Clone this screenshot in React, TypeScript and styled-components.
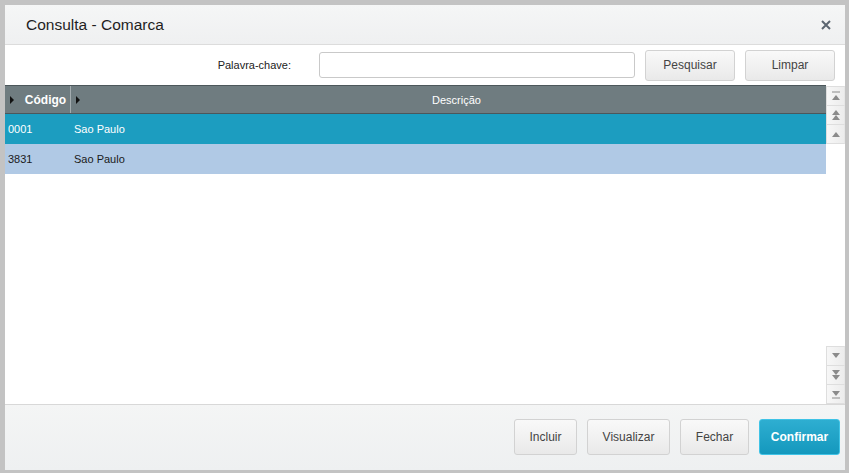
import React from 'react';
import styled, { createGlobalStyle, css } from 'styled-components';

const GlobalStyle = createGlobalStyle`
    html, body {
        margin: 0;
        padding: 0;
        background: #c3c3c3;
        font-family: Arial, 'Liberation Sans', sans-serif;
    }
    * {
        box-sizing: border-box;
    }
`;

interface Row {
    code: string;
    description: string;
}

const rows: Array<Row> = [
    { code: '0001', description: 'Sao Paulo' },
    { code: '3831', description: 'Sao Paulo' },
];

const Page = styled.div`
    width: 849px;
    height: 473px;
    padding: 5px 4px 3px 5px;
    background: #c3c3c3;
`;

const Dialog = styled.div`
    height: 100%;
    display: flex;
    flex-direction: column;
    background: #fff;
`;

const Header = styled.div`
    height: 40px;
    flex-shrink: 0;
    display: flex;
    align-items: center;
    justify-content: space-between;
    padding: 0 12px 0 21px;
    background: linear-gradient(#f5f6f6, #eff0f1);
    border-bottom: 1px solid #dcdcdc;
`;

const Title = styled.h1`
    margin: 0;
    font-size: 15.5px;
    font-weight: normal;
    color: #1f1f1f;
    padding-top: 1px;
`;

const CloseButton = styled.button`
    border: none;
    background: none;
    padding: 0;
    width: 14px;
    height: 14px;
    display: flex;
    align-items: center;
    justify-content: center;
    cursor: pointer;
`;

const SearchBar = styled.div`
    height: 40px;
    flex-shrink: 0;
    display: flex;
    align-items: center;
    justify-content: flex-end;
    padding: 0 10px 0 0;
`;

const Label = styled.label`
    font-size: 11px;
    color: #222;
    margin-right: 28px;
    margin-top: -1px;
`;

const SearchInput = styled.input`
    width: 316px;
    height: 26px;
    border: 1px solid #c9c9c9;
    border-radius: 3px;
    outline: none;
`;

const Button = styled.button<{ $primary?: boolean; $width: number; $height: number }>`
    width: ${({ $width }) => $width}px;
    height: ${({ $height }) => $height}px;
    border: 1px solid #d2d2d2;
    border-radius: 3px;
    background: linear-gradient(#f9f9f9, #e9e9e9);
    font-family: Arial, 'Liberation Sans', sans-serif;
    font-size: 12px;
    color: #444;
    cursor: pointer;
    padding: 0;
    ${({ $primary }) =>
        $primary &&
        css`
            border: 1px solid #3fc3e6;
            background: linear-gradient(#2eaed1, #1498bd);
            color: #fff;
            font-weight: bold;
        `}
`;

const SearchButton = styled(Button)`
    margin-left: 10px;
`;

const GridArea = styled.div`
    flex: 1;
    display: flex;
    min-height: 0;
`;

const Table = styled.div`
    flex: 1;
    display: flex;
    flex-direction: column;
`;

const HeaderRow = styled.div`
    height: 29px;
    display: flex;
    background: #6f7c80;
    border-top: 1px solid #4c575b;
    border-bottom: 1px solid #4c575b;
`;

const HeaderCell = styled.div<{ $width?: number; $bold?: boolean }>`
    position: relative;
    ${({ $width }) => ($width ? `width: ${$width}px;` : 'flex: 1;')}
    display: flex;
    align-items: center;
    justify-content: center;
    color: #fff;
    font-size: ${({ $bold }) => ($bold ? '12px' : '11px')};
    font-weight: ${({ $bold }) => ($bold ? 'bold' : 'normal')};
    padding-left: 16px;
    border-right: ${({ $width }) => ($width ? '1px solid #a3acaf' : 'none')};
`;

const SortArrow = styled.span`
    position: absolute;
    left: 5px;
    top: 10px;
    width: 0;
    height: 0;
    border-top: 4px solid transparent;
    border-bottom: 4px solid transparent;
    border-left: 4px solid #111;
`;

const DataRow = styled.div<{ $selected?: boolean }>`
    height: 30px;
    display: flex;
    align-items: center;
    font-size: 11px;
    background: ${({ $selected }) => ($selected ? '#1c9dc0' : '#b0c9e5')};
    color: ${({ $selected }) => ($selected ? '#fff' : '#1a1a1a')};
`;

const Cell = styled.div<{ $width?: number }>`
    ${({ $width }) => ($width ? `width: ${$width}px;` : 'flex: 1;')}
    padding-left: 3px;
`;

const ScrollBar = styled.div`
    width: 19px;
    display: flex;
    flex-direction: column;
    justify-content: space-between;
    padding: 2px 0 0;
    background: #fff;
`;

const ScrollGroup = styled.div`
    display: flex;
    flex-direction: column;
`;

const ScrollButton = styled.div`
    height: 20px;
    display: flex;
    align-items: center;
    justify-content: center;
    background: linear-gradient(90deg, #f7f7f7, #ececec);
    border: 1px solid #dedede;
    border-right-color: #e6e6e6;
    margin-top: -1px;
`;

const Footer = styled.div`
    height: 66px;
    flex-shrink: 0;
    display: flex;
    align-items: center;
    justify-content: flex-end;
    gap: 10px;
    padding: 0 5px 1px 0;
    background: linear-gradient(#f4f5f5, #eef0f1);
    border-top: 1px solid #d8d8d8;
`;

type ArrowKind = 'top' | 'double-up' | 'up' | 'down' | 'double-down' | 'bottom';

const ScrollArrow = ({ kind }: { kind: ArrowKind }) => {
    const fill = '#8b8b8b';
    const up = (y: number) => `M5 ${y} L9 ${y + 5} L1 ${y + 5} Z`;
    const down = (y: number) => `M1 ${y} L9 ${y} L5 ${y + 5} Z`;
    return (
        <svg width="10" height="12" viewBox="0 0 10 12">
            {kind === 'top' && (
                <>
                    <rect x="1" y="1.5" width="8" height="1" fill={fill} />
                    <path d={up(5)} fill={fill} />
                </>
            )}
            {kind === 'double-up' && (
                <>
                    <path d={up(1)} fill={fill} />
                    <path d={up(6)} fill={fill} />
                </>
            )}
            {kind === 'up' && <path d={up(4)} fill={fill} />}
            {kind === 'down' && <path d={down(3)} fill={fill} />}
            {kind === 'double-down' && (
                <>
                    <path d={down(1)} fill={fill} />
                    <path d={down(6)} fill={fill} />
                </>
            )}
            {kind === 'bottom' && (
                <>
                    <path d={down(3)} fill={fill} />
                    <rect x="1" y="9.5" width="8" height="1" fill={fill} />
                </>
            )}
        </svg>
    );
};

const CloseIcon = () => (
    <svg width="10" height="10" viewBox="0 0 10 10">
        <path d="M1 1 L9 9 M9 1 L1 9" stroke="#5b6570" strokeWidth="2" />
    </svg>
);

const App: React.FC = () => {
    return (
        <>
            <GlobalStyle />
            <Page>
                <Dialog>
                    <Header>
                        <Title>Consulta - Comarca</Title>
                        <CloseButton>
                            <CloseIcon />
                        </CloseButton>
                    </Header>
                    <SearchBar>
                        <Label>Palavra-chave:</Label>
                        <SearchInput />
                        <SearchButton $width={90} $height={31}>
                            Pesquisar
                        </SearchButton>
                        <SearchButton $width={90} $height={31}>
                            Limpar
                        </SearchButton>
                    </SearchBar>
                    <GridArea>
                        <Table>
                            <HeaderRow>
                                <HeaderCell $width={66} $bold>
                                    <SortArrow />
                                    Código
                                </HeaderCell>
                                <HeaderCell>
                                    <SortArrow />
                                    Descrição
                                </HeaderCell>
                            </HeaderRow>
                            {rows.map((row, index) => (
                                <DataRow key={row.code} $selected={index === 0}>
                                    <Cell $width={66}>{row.code}</Cell>
                                    <Cell>{row.description}</Cell>
                                </DataRow>
                            ))}
                        </Table>
                        <ScrollBar>
                            <ScrollGroup>
                                <ScrollButton>
                                    <ScrollArrow kind="top" />
                                </ScrollButton>
                                <ScrollButton>
                                    <ScrollArrow kind="double-up" />
                                </ScrollButton>
                                <ScrollButton>
                                    <ScrollArrow kind="up" />
                                </ScrollButton>
                            </ScrollGroup>
                            <ScrollGroup>
                                <ScrollButton>
                                    <ScrollArrow kind="down" />
                                </ScrollButton>
                                <ScrollButton>
                                    <ScrollArrow kind="double-down" />
                                </ScrollButton>
                                <ScrollButton>
                                    <ScrollArrow kind="bottom" />
                                </ScrollButton>
                            </ScrollGroup>
                        </ScrollBar>
                    </GridArea>
                    <Footer>
                        <Button $width={63} $height={36}>
                            Incluir
                        </Button>
                        <Button $width={83} $height={36}>
                            Visualizar
                        </Button>
                        <Button $width={69} $height={36}>
                            Fechar
                        </Button>
                        <Button $primary $width={81} $height={36}>
                            Confirmar
                        </Button>
                    </Footer>
                </Dialog>
            </Page>
        </>
    );
};

export default App;
